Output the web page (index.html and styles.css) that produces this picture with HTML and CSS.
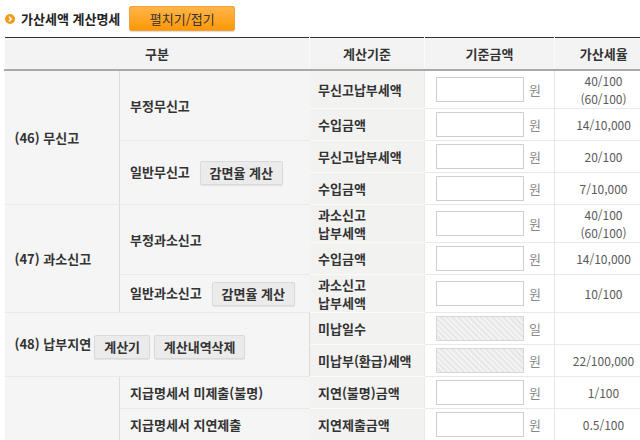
FILE: index.html
```html
<!DOCTYPE html>
<html lang="ko">
<head>
  <meta charset="UTF-8">
  <title>가산세액 계산명세</title>
  <link rel="stylesheet" href="styles.css">
</head>
<body>

  <!-- Section header -->
  <div class="section-head">
    <svg class="bullet" width="10" height="10" viewBox="0 0 10 10">
      <circle cx="5" cy="5" r="5" fill="#f29b1d"/>
      <path d="M4 2.8 L6.2 5 L4 7.2" fill="none" stroke="#fff" stroke-width="1.6"/>
    </svg>
    <h2 class="section-title">가산세액 계산명세</h2>
    <button class="btn-toggle">펼치기/접기</button>
  </div>

  <!-- Penalty tax table -->
  <table class="calc-table">
    <colgroup>
      <col class="c-cat">
      <col class="c-sub">
      <col class="c-basis">
      <col class="c-amount">
      <col class="c-rate">
    </colgroup>
    <thead>
      <tr>
        <th colspan="2">구분</th>
        <th>계산기준</th>
        <th>기준금액</th>
        <th>가산세율</th>
      </tr>
    </thead>
    <tbody>
      <tr class="tall">
        <td rowspan="4" class="cat">(46) 무신고</td>
        <td rowspan="2" class="sub">부정무신고</td>
        <td class="basis">무신고납부세액</td>
        <td class="amount"><input class="amt-input" type="text"><span class="unit">원</span></td>
        <td class="rate">40/100<br>(60/100)</td>
      </tr>
      <tr>
        <td class="basis">수입금액</td>
        <td class="amount"><input class="amt-input" type="text"><span class="unit">원</span></td>
        <td class="rate">14/10,000</td>
      </tr>
      <tr>
        <td rowspan="2" class="sub">일반무신고<button class="btn-gray btn-rate">감면율 계산</button></td>
        <td class="basis">무신고납부세액</td>
        <td class="amount"><input class="amt-input" type="text"><span class="unit">원</span></td>
        <td class="rate">20/100</td>
      </tr>
      <tr>
        <td class="basis">수입금액</td>
        <td class="amount"><input class="amt-input" type="text"><span class="unit">원</span></td>
        <td class="rate">7/10,000</td>
      </tr>

      <tr class="tall">
        <td rowspan="3" class="cat">(47) 과소신고</td>
        <td rowspan="2" class="sub">부정과소신고</td>
        <td class="basis">과소신고<br>납부세액</td>
        <td class="amount"><input class="amt-input" type="text"><span class="unit">원</span></td>
        <td class="rate">40/100<br>(60/100)</td>
      </tr>
      <tr>
        <td class="basis">수입금액</td>
        <td class="amount"><input class="amt-input" type="text"><span class="unit">원</span></td>
        <td class="rate">14/10,000</td>
      </tr>
      <tr class="tall">
        <td class="sub">일반과소신고<button class="btn-gray btn-rate">감면율 계산</button></td>
        <td class="basis">과소신고<br>납부세액</td>
        <td class="amount"><input class="amt-input" type="text"><span class="unit">원</span></td>
        <td class="rate">10/100</td>
      </tr>

      <tr>
        <td rowspan="2" colspan="2" class="cat">(48) 납부지연<button class="btn-gray btn-calc">계산기</button><button class="btn-gray btn-calc btn-clear">계산내역삭제</button></td>
        <td class="basis">미납일수</td>
        <td class="amount"><input class="amt-input locked" type="text" disabled><span class="unit">일</span></td>
        <td class="rate"></td>
      </tr>
      <tr>
        <td class="basis">미납부(환급)세액</td>
        <td class="amount"><input class="amt-input locked" type="text" disabled><span class="unit">원</span></td>
        <td class="rate">22/100,000</td>
      </tr>

      <tr>
        <td rowspan="2" class="cat"></td>
        <td class="sub">지급명세서 미제출(불명)</td>
        <td class="basis">지연(불명)금액</td>
        <td class="amount"><input class="amt-input" type="text"><span class="unit">원</span></td>
        <td class="rate">1/100</td>
      </tr>
      <tr>
        <td class="sub">지급명세서 지연제출</td>
        <td class="basis">지연제출금액</td>
        <td class="amount"><input class="amt-input" type="text"><span class="unit">원</span></td>
        <td class="rate">0.5/100</td>
      </tr>
    </tbody>
  </table>

</body>
</html>
```

FILE: styles.css
```css
/* Global Styles */
body {
  font-family: "Noto Sans CJK KR", "Noto Sans", sans-serif;
  font-size: 13px;
  color: #333;
  margin: 0;
  padding: 0 0 0 4px;
  background-color: #fff;
  overflow: hidden;
}

/* Section header */
.section-head {
  display: flex;
  align-items: center;
  height: 37px;
}

.bullet {
  margin: 0 6px 0 1px;
}

.section-title {
  margin: 0;
  font-size: 13px;
  font-weight: 700;
  color: #222;
}

.btn-toggle {
  margin-left: 9px;
  width: 106px;
  height: 25px;
  border: 1px solid #f3a13a;
  border-radius: 2px;
  background: linear-gradient(#ffb54a, #ff9808);
  box-shadow: 0 1px 1px rgba(0, 0, 0, 0.15);
  font-family: inherit;
  font-size: 13px;
  color: #333;
  cursor: pointer;
}

/* Table */
.calc-table {
  table-layout: fixed;
  width: 648px;
  border-collapse: collapse;
  border-top: 1px solid #333;
}

.c-cat { width: 115px; }
.c-sub { width: 190px; }
.c-basis { width: 115px; }
.c-amount { width: 130px; }
.c-rate { width: 98px; }

.calc-table th {
  height: 31px;
  padding: 0;
  background-color: #f3f3f3;
  border-bottom: 2px solid #a9a9a9;
  border-left: 1px solid #fafafa;
  font-weight: 700;
  color: #333;
}

.calc-table td {
  height: 31px;
  padding: 0;
  border: 1px solid #e9e9e9;
  border-top: 0;
}

.calc-table tr.tall td {
  height: 37px;
}

.calc-table td:first-child {
  border-left: 0;
}

.cat {
  padding-left: 10px !important;
  background-color: #f5f5f5;
  font-weight: 700;
  border-right: 1px solid #dcdcdc !important;
}

.sub {
  padding-left: 10px !important;
  background-color: #f5f5f5;
  font-weight: 700;
  border-right-color: #f5f5f5 !important;
}

.basis {
  padding-left: 8px !important;
  background-color: #f2f2f1;
  font-weight: 700;
  line-height: 18px;
  border-bottom-color: #fbfbfb !important;
}

.amount {
  padding-left: 11px !important;
  white-space: nowrap;
}

.rate {
  text-align: center;
  font-size: 12px;
  color: #5a5a5a;
  line-height: 18px;
}

/* Amount inputs */
.amt-input {
  box-sizing: border-box;
  width: 88px;
  height: 25px;
  border: 1px solid #cfcfcf;
  background-color: #fff;
  vertical-align: middle;
}

.amt-input.locked {
  border-color: #d6d6d6;
  background: repeating-linear-gradient(45deg, #f3f3f3 0 2px, #e7e7e7 2px 4px);
}

.unit {
  margin-left: 5px;
  color: #8a8a8a;
  vertical-align: middle;
}

/* Grey buttons */
.btn-gray {
  height: 24px;
  margin-left: 10px;
  padding: 0;
  border: 1px solid #dadada;
  border-radius: 2px;
  background-color: #ebebeb;
  box-shadow: 0 1px 1px rgba(0, 0, 0, 0.08);
  font-family: inherit;
  font-size: 13px;
  font-weight: 700;
  color: #333;
  vertical-align: middle;
  cursor: pointer;
}

.btn-rate {
  width: 83px;
}

.btn-calc {
  width: 56px;
  margin-left: 3px;
  margin-top: 4px;
}

.btn-clear {
  width: 91px;
  margin-left: 4px;
}
```
